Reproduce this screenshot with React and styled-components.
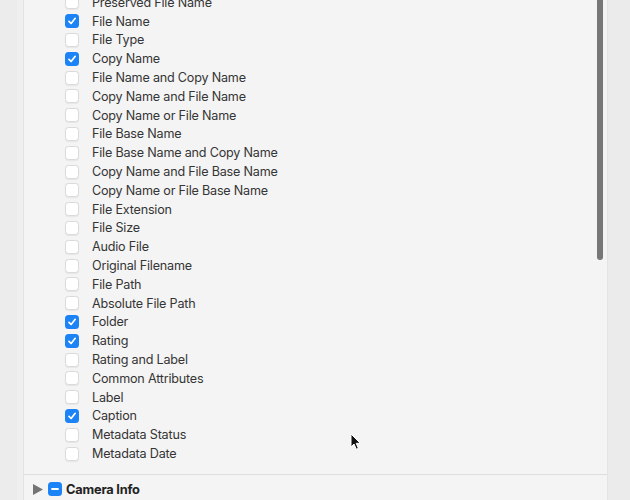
import React from "react";
import styled, { createGlobalStyle } from "styled-components";

const GlobalStyle = createGlobalStyle`
  html, body {
    margin: 0;
    padding: 0;
    overflow: hidden;
  }
  body {
    font-family: Inter, "Liberation Sans", sans-serif;
    -webkit-font-smoothing: antialiased;
  }
`;

const fields = [
  ["Preserved File Name", false],
  ["File Name", true],
  ["File Type", false],
  ["Copy Name", true],
  ["File Name and Copy Name", false],
  ["Copy Name and File Name", false],
  ["Copy Name or File Name", false],
  ["File Base Name", false],
  ["File Base Name and Copy Name", false],
  ["Copy Name and File Base Name", false],
  ["Copy Name or File Base Name", false],
  ["File Extension", false],
  ["File Size", false],
  ["Audio File", false],
  ["Original Filename", false],
  ["File Path", false],
  ["Absolute File Path", false],
  ["Folder", true],
  ["Rating", true],
  ["Rating and Label", false],
  ["Common Attributes", false],
  ["Label", false],
  ["Caption", true],
  ["Metadata Status", false],
  ["Metadata Date", false],
];

const Page = styled.div`
  display: flex;
  width: 630px;
  height: 500px;
  background: #ebebeb;
  overflow: hidden;
`;

const Gutter = styled.div`
  width: ${(p) => p.$w}px;
  flex-shrink: 0;
  background: ${(p) =>
    p.$left
      ? "linear-gradient(to right, #ececec 0, #ececec 17px, #efefef 17px, #efefef 100%)"
      : "#ebebeb"};
  border-left: ${(p) => (p.$left ? "none" : "1px solid #e4e4e4")};
`;

const Panel = styled.div`
  position: relative;
  flex: 1;
  display: flex;
  flex-direction: column;
  background: #f4f4f4;
  border-left: 1px solid #e3e3e3;
`;

const List = styled.div`
  flex: 1;
  display: flex;
  flex-direction: column;
  padding-left: 41px;
  margin-top: -7px;
`;

const Row = styled.div`
  display: flex;
  align-items: center;
  height: 18.8px;
  gap: 13px;
  flex-shrink: 0;
`;

const Box = styled.span`
  width: 14px;
  height: 14px;
  box-sizing: border-box;
  border-radius: 3.5px;
  display: flex;
  align-items: center;
  justify-content: center;
  background: ${(p) => (p.$on ? "#1c83f6" : "#ffffff")};
  border: ${(p) => (p.$on ? "none" : "1px solid #dadada")};
  box-shadow: ${(p) => (p.$on ? "none" : "0 0.5px 1px rgba(0,0,0,0.06)")};
`;

const Label = styled.span`
  font-size: 12.6px;
  color: #353535;
  letter-spacing: -0.2px;
  white-space: nowrap;
`;

const Divider = styled.div`
  height: 1px;
  background: #dedede;
  flex-shrink: 0;
`;

const Footer = styled.div`
  height: 25px;
  display: flex;
  align-items: center;
  padding: 3px 0 0 8px;
  box-sizing: border-box;
  gap: 4px;
  flex-shrink: 0;
`;

const Section = styled.span`
  font-size: 12.8px;
  font-weight: 700;
  color: #222;
  letter-spacing: -0.2px;
`;

const Scroll = styled.div`
  position: absolute;
  top: 0;
  right: 4px;
  width: 6px;
  height: 260px;
  background: #777777;
  border-radius: 0 0 3px 3px;
`;

const Cursor = styled.svg`
  position: absolute;
  left: 326px;
  top: 433px;
`;

const Check = () => (
  <svg width="10" height="10" viewBox="0 0 10 10">
    <path
      d="M2 5.3 L4.1 7.5 L8.2 2.3"
      fill="none"
      stroke="#fff"
      strokeWidth="1.7"
      strokeLinecap="round"
      strokeLinejoin="round"
    />
  </svg>
);

const App = () => (
  <Page>
    <GlobalStyle />
    <Gutter $left $w={23} />
    <Panel>
      <List>
        {fields.map(([name, on]) => (
          <Row key={name}>
            <Box $on={on}>{on && <Check />}</Box>
            <Label>{name}</Label>
          </Row>
        ))}
      </List>
      <Divider />
      <Footer>
        <svg width="12" height="13" viewBox="0 0 12 13">
          <path d="M1 1 L11 6.5 L1 12 Z" fill="#747474" />
        </svg>
        <Box $on>
          <svg width="10" height="10" viewBox="0 0 10 10">
            <path d="M2 5 H8" stroke="#fff" strokeWidth="1.8" strokeLinecap="round" />
          </svg>
        </Box>
        <Section>Camera Info</Section>
      </Footer>
      <Scroll />
      <Cursor width="12" height="18" viewBox="0 0 12 18">
        <path
          d="M1 1 L1 14 L4 11 L6.3 16.2 L8.4 15.3 L6.2 10.3 L10.3 10.3 Z"
          fill="#111"
          stroke="#fff"
          strokeWidth="1"
          strokeLinejoin="round"
        />
      </Cursor>
    </Panel>
    <Gutter $w={22} />
  </Page>
);

export default App;
